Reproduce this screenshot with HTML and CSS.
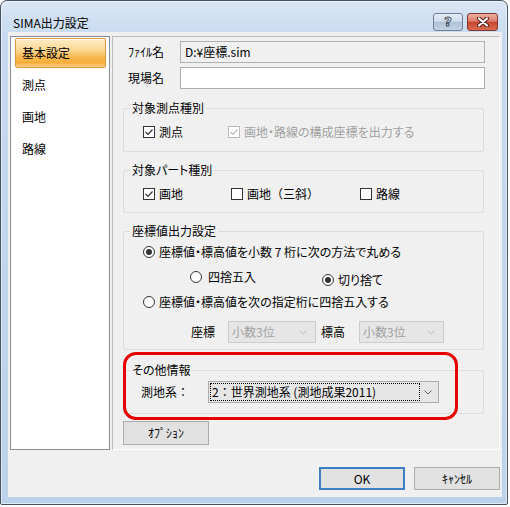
FILE: index.html
```html
<!DOCTYPE html>
<html lang="ja">
<head>
<meta charset="utf-8">
<title>SIMA出力設定</title>
<link rel="stylesheet" href="styles.css">
</head>
<body>
<div class="window">
  <div class="titlebar">
    <span class="title">SIMA出力設定</span>
    <div class="caption">
      <span class="cap help"><span class="qmark">?</span></span>
      <span class="cap close">
        <svg width="14" height="10" viewBox="0 0 14 10">
          <path d="M3 1.5 L11 8.5 M11 1.5 L3 8.5" stroke="#5a1e16" stroke-width="4.2" stroke-linecap="round"/>
          <path d="M3 1.5 L11 8.5 M11 1.5 L3 8.5" stroke="#ffffff" stroke-width="2.2" stroke-linecap="round"/>
        </svg>
      </span>
    </div>
  </div>
  <div class="client">
    <div class="main">
      <ul class="nav">
        <li class="sel">基本設定</li>
        <li>測点</li>
        <li>画地</li>
        <li>路線</li>
      </ul>
      <div class="panel">
        <div class="field">
          <span class="flabel">ﾌｧｲﾙ名</span>
          <div class="input disabled">D:¥座標.sim</div>
        </div>
        <div class="field">
          <span class="flabel">現場名</span>
          <div class="input"></div>
        </div>

        <fieldset class="group g1">
          <legend>対象測点種別</legend>
          <div class="row">
            <span class="opt"><span class="box"><svg width="10" height="10" viewBox="0 0 10 10"><polyline points="1.5,5 4,7.5 8.5,2.5" fill="none" stroke="#333" stroke-width="1.2"/></svg></span>測点</span>
            <span class="opt dis"><span class="box"><svg width="10" height="10" viewBox="0 0 10 10"><polyline points="1.5,5 4,7.5 8.5,2.5" fill="none" stroke="#bcbcbc" stroke-width="1.2"/></svg></span>画地・路線の構成座標を出力する</span>
          </div>
        </fieldset>

        <fieldset class="group g2">
          <legend>対象パート種別</legend>
          <div class="row">
            <span class="opt"><span class="box"><svg width="10" height="10" viewBox="0 0 10 10"><polyline points="1.5,5 4,7.5 8.5,2.5" fill="none" stroke="#333" stroke-width="1.2"/></svg></span>画地</span>
            <span class="opt full"><span class="box"></span>画地（三斜）</span>
            <span class="opt"><span class="box"></span>路線</span>
          </div>
        </fieldset>

        <fieldset class="group g3">
          <legend>座標値出力設定</legend>
          <div class="row r1">
            <span class="opt"><span class="radio on"></span>座標値・標高値を小数 7 桁に次の方法で丸める</span>
          </div>
          <div class="row r2">
            <span class="opt"><span class="radio"></span>四捨五入</span>
            <span class="opt low"><span class="radio on"></span>切り捨て</span>
          </div>
          <div class="row r3">
            <span class="opt"><span class="radio"></span>座標値・標高値を次の指定桁に四捨五入する</span>
          </div>
          <div class="row r4">
            <span class="clabel">座標</span>
            <div class="combo dcombo c1"><span>小数3位</span><svg width="8" height="5" viewBox="0 0 8 5"><polyline points="0.5,0.5 4,4 7.5,0.5" fill="none" stroke="#bdbdbd"/></svg></div>
            <span class="clabel l2">標高</span>
            <div class="combo dcombo c2"><span>小数3位</span><svg width="8" height="5" viewBox="0 0 8 5"><polyline points="0.5,0.5 4,4 7.5,0.5" fill="none" stroke="#bdbdbd"/></svg></div>
          </div>
        </fieldset>

        <fieldset class="group g4">
          <legend>その他情報</legend>
          <div class="row r5">
            <span class="glabel">測地系：</span>
            <div class="combo geo"><span class="focus">2：世界測地系 (測地成果2011)</span><svg width="8" height="5" viewBox="0 0 8 5"><polyline points="0.5,0.5 4,4 7.5,0.5" fill="none" stroke="#606060"/></svg></div>
          </div>
        </fieldset>

        <button class="btn optbtn">ｵﾌﾟｼｮﾝ</button>

        <div class="highlight"></div>
      </div>
    </div>
    <div class="footer">
      <button class="btn default">OK</button>
      <button class="btn">ｷｬﾝｾﾙ</button>
    </div>
  </div>
</div>
</body>
</html>
```

FILE: styles.css
```css
* { box-sizing: border-box; }
html, body { margin: 0; padding: 0; background: #ffffff; }
body {
  font-family: "Noto Sans CJK JP", "Noto Sans", sans-serif;
  font-size: 12px;
  line-height: 16px;
  color: #000;
  font-feature-settings: "palt";
}

.window {
  width: 508px;
  height: 505px;
  border: 1px solid #46525f;
  border-radius: 7px 7px 2px 2px;
  background: linear-gradient(#d9e6f5 0, #c6d9ef 40px, #bcd2ea 100%);
  box-shadow: inset 0 0 0 1px rgba(255,255,255,0.55);
  display: flex;
  flex-direction: column;
}

.titlebar {
  height: 31px;
  flex: none;
  display: flex;
  justify-content: space-between;
  align-items: flex-start;
}
.title { padding: 14px 0 0 12px; color: #000; }
.caption { display: flex; gap: 4px; margin: 12px 9px 0 0; }
.cap {
  height: 18px;
  border-radius: 3px;
  display: flex;
  align-items: center;
  justify-content: center;
}
.help {
  width: 30px;
  border: 1px solid #6f8096;
  background: linear-gradient(#e6eef7 0%, #cfdcea 45%, #aec1d7 52%, #c3d3e5 100%);
}
.qmark {
  font-family: "DejaVu Sans", sans-serif;
  font-weight: bold;
  font-size: 13px;
  line-height: 16px;
  color: #eef3f9;
  -webkit-text-stroke: 0.9px #3e4c5e;
}
.close {
  width: 31px;
  border: 1px solid #84352c;
  background: linear-gradient(#eeb0a3 0%, #dc7d6b 45%, #c7462f 52%, #d86b52 100%);
}

.client {
  flex: none;
  height: 465px;
  margin: 0 5px 0 7px;
  background: #f0f0f0;
  padding: 4px 2px 0 2px;
  display: flex;
  flex-direction: column;
}
.main { display: flex; gap: 2px; height: 414px; flex: none; }

.nav {
  list-style: none;
  margin: 0;
  padding: 1px 3px 0 4px;
  width: 100px;
  border: 1px solid #8a8f96;
  background: #fff;
}
.nav li {
  height: 30px;
  margin-bottom: 2px;
  border: 1px solid transparent;
  border-radius: 2px;
  padding-left: 6px;
  line-height: 28px;
}
.nav li.sel {
  border-color: #dc9b40;
  background: linear-gradient(#feecc8 0%, #fcd792 40%, #f8bb55 62%, #f6ad3a 85%, #fbcf85 100%);
  box-shadow: inset 0 1px 0 rgba(255,255,255,0.7);
}

.panel {
  flex: 1;
  position: relative;
  border: 1px solid;
  border-color: #bcbcbc #ffffff #ffffff #bcbcbc;
  padding: 4px 0 0 10px;
}

.field { display: flex; align-items: center; height: 22px; padding-left: 5px; }
.field + .field { margin-top: 4px; }
.flabel { width: 52px; flex: none; }
.input {
  width: 305px;
  height: 22px;
  border: 1px solid #abadb3;
  background: #fff;
  padding: 0 4px;
  line-height: 20px;
}
.input.disabled { background: #f0f0f0; border-color: #b0b0b0; }

.group {
  width: 361px;
  min-width: 0;
  margin: 10px 0 0 0;
  padding: 0 6px 10px 6px;
  border: 1px solid #dcdcdc;
  border-radius: 2px;
}
.group legend { padding: 0 2px; line-height: 16px; }
.g1 { margin-top: 11px; padding-top: 8px; padding-bottom: 11px; }
.g2 { padding-top: 8px; padding-bottom: 10px; }
.g3 { padding-top: 5px; padding-bottom: 6px; }
.g4 { margin-top: 12px; padding-top: 3px; padding-bottom: 10px; }

.row { display: flex; align-items: center; height: 16px; padding-left: 13px; }
.opt { display: flex; align-items: center; flex: none; white-space: nowrap; }
.opt.dis { color: #a0a0a0; }
.opt.full { font-feature-settings: normal; }
.g1 .opt:first-child { width: 85px; }
.g2 .opt:nth-child(1) { width: 88px; }
.g2 .opt:nth-child(2) { width: 129px; }

.box {
  width: 12px;
  height: 12px;
  border: 1px solid #333;
  background: #fff;
  margin-right: 4px;
  display: flex;
  align-items: center;
  justify-content: center;
  flex: none;
}
.opt.dis .box { border-color: #bcbcbc; }

.radio {
  width: 12px;
  height: 12px;
  border: 1px solid #333;
  border-radius: 50%;
  background: #fff;
  margin-right: 4px;
  display: flex;
  align-items: center;
  justify-content: center;
  flex: none;
}
.radio.on::after {
  content: "";
  width: 6px;
  height: 6px;
  border-radius: 50%;
  background: #333;
}

.r2 { margin-top: 9px; padding-left: 60px; align-items: flex-start; }
.r2 .opt:first-child { width: 132px; }
.r2 .opt:first-child .radio { margin-right: 6px; }
.r2 .low { margin-top: 3px; }
.r3 { margin-top: 9px; }
.r4 { margin-top: 11px; height: 22px; padding-left: 61px; }
.clabel { width: 37px; flex: none; }
.clabel.l2 { width: 38px; margin-left: 5px; }

.combo {
  height: 22px;
  display: flex;
  align-items: center;
  justify-content: space-between;
  border: 1px solid #acacac;
  background: #e5e5e5;
  flex: none;
}
.dcombo {
  border-color: #cccccc;
  background: #e6e6e6;
  color: #a2a2a2;
  padding: 0 8px 0 3px;
}
.c1 { width: 88px; }
.c2 { width: 85px; }

.r5 { height: 22px; padding-left: 11px; }
.glabel { width: 67px; flex: none; font-feature-settings: normal; }
.geo { width: 231px; padding: 0 6px 0 1px; background: #e6e6e6; }
.focus {
  width: 210px;
  height: 18px;
  border: 1px dotted #000;
  padding-left: 1px;
  line-height: 16px;
  font-feature-settings: normal;
  white-space: nowrap;
}

.btn {
  font-family: "Noto Sans CJK JP", "Noto Sans", sans-serif;
  font-size: 12px;
  line-height: 16px;
  color: #000;
  background: #e1e1e1;
  border: 1px solid #adadad;
  padding: 0;
  width: 86px;
  height: 23px;
}
.optbtn { display: block; margin-top: 7px; height: 24px; }
.btn.default { border: 2px solid #3b80c2; }

.footer {
  display: flex;
  justify-content: flex-end;
  gap: 9px;
  padding-top: 17px;
}

.highlight {
  position: absolute;
  left: 10px;
  top: 315px;
  width: 335px;
  height: 68px;
  border: 3px solid #e60000;
  border-radius: 13px;
  pointer-events: none;
}
```
